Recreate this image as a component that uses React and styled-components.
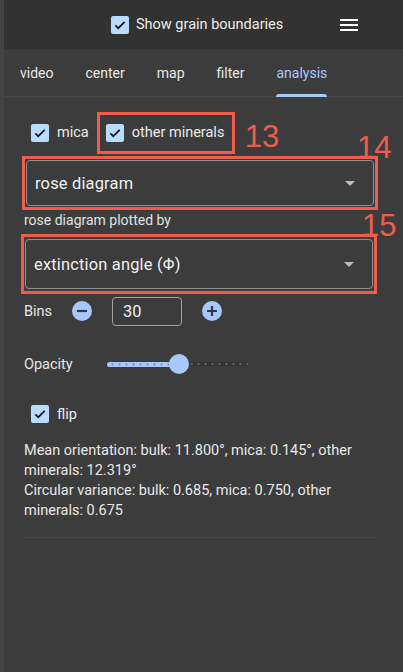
import React from 'react';
import styled, { createGlobalStyle } from 'styled-components';

const GlobalStyle = createGlobalStyle`
  html, body {
    margin: 0;
    padding: 0;
    background: #3c3c3c;
  }
  body {
    font-family: Roboto, 'Liberation Sans', sans-serif;
    color: #e6e6e6;
  }
  * { box-sizing: border-box; }
`;

const ACCENT = '#a8c8fa';
const RED = '#ee5c4e';

const Page = styled.div`
    display: flex;
    width: 403px;
    height: 672px;
    overflow: hidden;
    background: #3c3c3c;
`
const SideStrip = styled.div`
    width: 4px;
    flex-shrink: 0;
    background: #444444;
`
const Main = styled.div`
    flex: 1;
    display: flex;
    flex-direction: column;
    min-width: 0;
`
const Header = styled.header`
    height: 49px;
    display: flex;
    align-items: center;
    padding-left: 107px;
    padding-right: 45px;
    background: #323232;
`
const HeaderLabel = styled.span`
    font-size: 14.5px;
    color: #ececec;
    margin-left: 7px;
`
const Burger = styled.div`
    margin-left: auto;
    width: 18px;
    display: flex;
    flex-direction: column;
    gap: 3px;
    span {
        display: block;
        height: 2px;
        background: #ffffff;
    }
`
const Tabs = styled.nav`
    height: 48px;
    display: flex;
    border-bottom: 1px solid #474747;
`
const Tab = styled.div`
    position: relative;
    padding: 0 16px;
    display: flex;
    align-items: center;
    font-size: 14px;
    color: ${props => props.active ? ACCENT : '#e8e8e8'};
    &::after {
        content: '';
        display: ${props => props.active ? 'block' : 'none'};
        position: absolute;
        left: 16px;
        right: 16px;
        bottom: -1px;
        height: 3px;
        border-radius: 3px 3px 0 0;
        background: ${ACCENT};
    }
`
const Content = styled.div`
    padding: 14px 26px 0 20px;
    display: flex;
    flex-direction: column;
`
const CheckRow = styled.div`
    display: flex;
    align-items: center;
    height: 43px;
    padding-left: 7px;
`
const CheckLabel = styled.label`
    display: flex;
    align-items: center;
    gap: 8px;
    font-size: 14.5px;
    color: #ececec;
`
const Box = styled.span`
    width: 18px;
    height: 18px;
    border-radius: 2px;
    background: #b9dbfd;
    display: flex;
    align-items: center;
    justify-content: center;
    flex-shrink: 0;
`
const Marked = styled.div`
    position: relative;
    border: 3px solid ${RED};
    padding: ${props => props.pad || '1px'};
    margin: ${props => props.m || '0'};
    display: flex;
    align-items: center;
`
const Badge = styled.span`
    position: absolute;
    font-size: 31px;
    line-height: 1;
    color: ${RED};
    font-family: 'Liberation Sans', Arial, sans-serif;
    top: ${props => props.top};
    left: ${props => props.left};
`
const SelectBox = styled.div`
    flex: 1;
    height: ${props => props.h || '46px'};
    border: 1px solid #8e8e8e;
    border-radius: 4px;
    display: flex;
    align-items: center;
    padding: 0 18px 0 8px;
    font-size: 16.4px;
    color: #f0f0f0;
    letter-spacing: 0.2px;
`
const Caret = styled.span`
    margin-left: auto;
    width: 0;
    height: 0;
    border-left: 5px solid transparent;
    border-right: 5px solid transparent;
    border-top: 5px solid #b9bcc2;
`
const FieldLabel = styled.div`
    font-size: 14px;
    color: #e2e2e2;
    padding: 2px 0 6px 0;
`
const Row = styled.div`
    display: flex;
    align-items: center;
    padding-left: ${props => props.pl || '0'};
    height: ${props => props.h || '30px'};
    margin-top: ${props => props.mt || '0'};
`
const RowLabel = styled.span`
    font-size: 14.5px;
    color: #e6e6e6;
    width: ${props => props.w || 'auto'};
`
const RoundBtn = styled.span`
    width: 20px;
    height: 20px;
    border-radius: 50%;
    background: ${ACCENT};
    display: flex;
    align-items: center;
    justify-content: center;
`
const NumberInput = styled.div`
    width: 70px;
    height: 29px;
    margin: 0 20px;
    border: 1px solid #a3a3a3;
    border-radius: 4px;
    display: flex;
    align-items: center;
    padding-left: 10px;
    font-size: 16.4px;
    color: #f0f0f0;
`
const Slider = styled.div`
    position: relative;
    width: 143px;
    height: 20px;
    display: flex;
    align-items: center;
`
const Track = styled.div`
    height: ${props => props.filled ? '5px' : '4px'};
    border-radius: 3px;
    background-color: ${props => props.filled ? ACCENT : '#34363a'};
    background-image: radial-gradient(circle, ${props => props.filled ? '#6f95cc' : '#62666d'} 0.8px, transparent 1.3px);
    background-size: 7px 100%;
    background-position: 2px 0;
`
const Thumb = styled.span`
    position: absolute;
    top: 0;
    width: 20px;
    height: 20px;
    margin-left: -10px;
    border-radius: 50%;
    background: ${ACCENT};
`
const Stats = styled.div`
    font-size: 14.5px;
    line-height: 20px;
    color: #e8e8e8;
    margin-top: 12px;
`
const Divider = styled.hr`
    border: 0;
    height: 1px;
    background: #47484c;
    margin: 16px 0 0 0;
`

function Check() {
    return (
        <Box>
            <svg width="14" height="14" viewBox="0 0 24 24">
                <path d="M4 12.5l5 5L20 6.5" fill="none" stroke="#1b1b1b" strokeWidth="3" />
            </svg>
        </Box>
    )
}

function Icon({ plus }) {
    return (
        <RoundBtn>
            <svg width="12" height="12" viewBox="0 0 12 12">
                <path d={plus ? 'M1 6h10M6 1v10' : 'M1 6h10'} stroke="#2f3a48" strokeWidth="2.2" />
            </svg>
        </RoundBtn>
    )
}

export default function App() {
    const tabs = ['video', 'center', 'map', 'filter', 'analysis'];
    const opacity = 0.5;
    return (
        <Page>
            <GlobalStyle />
            <SideStrip />
            <Main>
                <Header>
                    <Check />
                    <HeaderLabel>Show grain boundaries</HeaderLabel>
                    <Burger><span /><span /><span /></Burger>
                </Header>
                <Tabs>
                    {tabs.map(t => <Tab key={t} active={t === 'analysis'}>{t}</Tab>)}
                </Tabs>
                <Content>
                    <CheckRow>
                        <CheckLabel><Check />mica</CheckLabel>
                        <Marked m="0 0 0 8px" pad="9px 8px 9px 6px">
                            <CheckLabel><Check />other minerals</CheckLabel>
                            <Badge top="6px" left="145px">13</Badge>
                        </Marked>
                    </CheckRow>
                    <Marked pad="1px" m="2px -1px 0 -2px">
                        <SelectBox h="46px">rose diagram<Caret /></SelectBox>
                        <Badge top="-27px" left="332px">14</Badge>
                    </Marked>
                    <FieldLabel>rose diagram plotted by</FieldLabel>
                    <Marked pad="2px 1px 2px 1px" m="0 0 0 -3px">
                        <SelectBox h="50px">extinction angle (Φ)<Caret /></SelectBox>
                        <Badge top="-27px" left="338px">15</Badge>
                    </Marked>
                    <Row mt="2px">
                        <RowLabel w="48px">Bins</RowLabel>
                        <Icon />
                        <NumberInput>30</NumberInput>
                        <Icon plus />
                    </Row>
                    <Row mt="23px">
                        <RowLabel w="83px">Opacity</RowLabel>
                        <Slider>
                            <Track filled style={{ width: `${opacity * 100}%` }} />
                            <Track style={{ flex: 1 }} />
                            <Thumb style={{ left: `${opacity * 100}%` }} />
                        </Slider>
                    </Row>
                    <Row mt="20px" pl="7px">
                        <CheckLabel><Check />flip</CheckLabel>
                    </Row>
                    <Stats>
                        Mean orientation: bulk: 11.800°, mica: 0.145°, other minerals: 12.319°<br />
                        Circular variance: bulk: 0.685, mica: 0.750, other minerals: 0.675
                    </Stats>
                    <Divider />
                </Content>
            </Main>
        </Page>
    )
}
